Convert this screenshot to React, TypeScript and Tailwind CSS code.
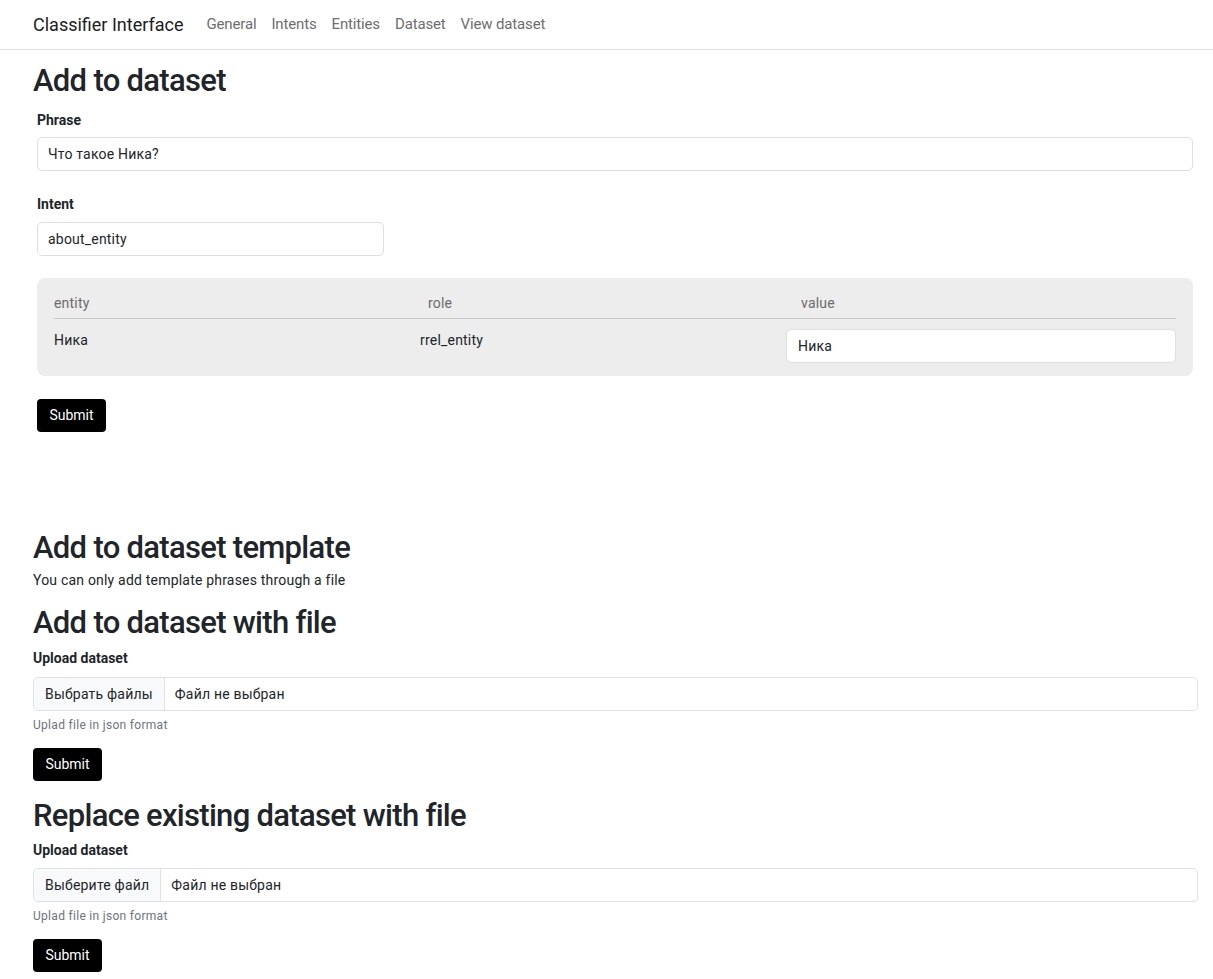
import React from "react";

function FileField({ button }: { button: string }) {
  return (
    <div className="flex h-[34px] w-full items-stretch rounded-[5px] border border-[#dee2e6] bg-white text-[14px] tracking-[0.2px] text-[#212529]">
      <div className="flex items-center rounded-l-[5px] border-r border-[#dee2e6] bg-[#f8f9fa] px-[11px]">{button}</div>
      <div className="flex items-center px-[10px]">Файл не выбран</div>
    </div>
  );
}

function SubmitBtn() {
  return (
    <button className="h-[33px] w-[69px] rounded-[4px] bg-black text-[14px] text-white">Submit</button>
  );
}

export default function App() {
  return (
    <div className="min-h-screen bg-white font-['Roboto',sans-serif] text-[#212529]">
      <nav className="flex h-[50px] items-center border-b border-[#dedede] px-[33px]">
        <span className="mr-[23px] text-[18px] text-[#1c1c1c]">Classifier Interface</span>
        <div className="flex gap-[15px] text-[15px] tracking-[-0.15px] text-[#6e6e6e]">
          <span>General</span>
          <span>Intents</span>
          <span>Entities</span>
          <span>Dataset</span>
          <span>View dataset</span>
        </div>
      </nav>
      <main className="pl-[33px] pr-[15px]">
        <h1 className="mt-[12px] text-[31px] font-medium leading-[38px] tracking-[-0.7px]">Add to dataset</h1>
        <div className="pl-[4px] pr-[5px] pt-[10px]">
          <div className="mb-[23px]">
            <div className="mb-[6px] text-[14px] font-bold leading-[21px]">Phrase</div>
            <div className="flex h-[34px] items-center rounded-[5px] border border-[#dedede] px-[10px] text-[14px] tracking-[0.2px]">Что такое Ника?</div>
          </div>
          <div className="mb-[22px]">
            <div className="mb-[7px] text-[14px] font-bold leading-[21px]">Intent</div>
            <div className="flex h-[34px] w-[347px] items-center rounded-[5px] border border-[#dedede] px-[10px] text-[14px] tracking-[0.2px]">about_entity</div>
          </div>
          <div className="rounded-[8px] bg-[#ededed] px-[17px] pb-[13px] pt-[15px] text-[14px] tracking-[0.2px]">
            <div className="grid grid-cols-[366px_366px_1fr] border-b border-[#c8c8c8] pb-[4px] text-[#6c6c6c]">
              <span>entity</span>
              <span className="pl-[8px]">role</span>
              <span className="pl-[15px]">value</span>
            </div>
            <div className="grid grid-cols-[366px_366px_1fr] pt-[10px]">
              <span className="pt-[1px]">Ника</span>
              <span className="pt-[1px]">rrel_entity</span>
              <div className="flex h-[34px] items-center rounded-[5px] border border-[#dedede] bg-white px-[11px]">Ника</div>
            </div>
          </div>
          <div className="mt-[23px]">
            <SubmitBtn />
          </div>
        </div>

        <h1 className="mt-[97px] text-[31px] font-medium leading-[38px] tracking-[-0.7px]">Add to dataset template</h1>
        <p className="mt-[3px] text-[14px] leading-[21px] tracking-[0.2px]">You can only add template phrases through a file</p>
        <h1 className="mt-[13px] text-[31px] font-medium leading-[38px] tracking-[-0.7px]">Add to dataset with file</h1>
        <div className="mt-[6px] mb-[8px] text-[14px] font-bold leading-[21px]">Upload dataset</div>
        <FileField button="Выбрать файлы" />
        <div className="mt-[5px] text-[12px] leading-[18px] tracking-[0.3px] text-[#6c757d]">Uplad file in json format</div>
        <div className="mt-[14px]">
          <SubmitBtn />
        </div>
        <h1 className="mt-[16px] text-[31px] font-medium leading-[38px] tracking-[-0.7px]">Replace existing dataset with file</h1>
        <div className="mt-[5px] mb-[7px] text-[14px] font-bold leading-[21px]">Upload dataset</div>
        <FileField button="Выберите файл" />
        <div className="mt-[5px] text-[12px] leading-[18px] tracking-[0.3px] text-[#6c757d]">Uplad file in json format</div>
        <div className="mt-[14px]">
          <SubmitBtn />
        </div>
      </main>
    </div>
  );
}
